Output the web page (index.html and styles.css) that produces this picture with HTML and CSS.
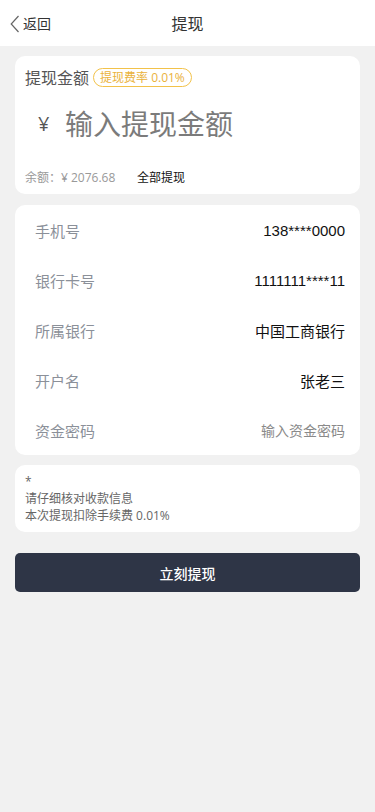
FILE: index.html
```html
<!DOCTYPE html>
<html lang="zh">
<head>
<meta charset="utf-8">
<meta name="viewport" content="width=device-width, initial-scale=1">
<title>提现</title>
<link rel="stylesheet" href="styles.css">
</head>
<body>
<header class="nav">
  <div class="back">
    <svg class="back-icon" width="10" height="18" viewBox="0 0 10 18"><path d="M8.5 1 L1.2 9 L8.5 17" fill="none" stroke="#666" stroke-width="1.2"/></svg>
    <span>返回</span>
  </div>
  <div class="nav-title">提现</div>
</header>
<main class="page">
  <section class="card amount-card">
    <div class="amount-title">
      <span>提现金额</span>
      <span class="rate">提现费率 0.01%</span>
    </div>
    <div class="amount-input">
      <span class="yen">¥</span>
      <span class="placeholder">输入提现金额</span>
    </div>
    <div class="balance">
      <span class="balance-label">余额：¥ 2076.68</span>
      <span class="all">全部提现</span>
    </div>
  </section>
  <section class="card info-card">
    <div class="row"><span class="label">手机号</span><span class="value num">138****0000</span></div>
    <div class="row"><span class="label">银行卡号</span><span class="value num">1111111****11</span></div>
    <div class="row"><span class="label">所属银行</span><span class="value">中国工商银行</span></div>
    <div class="row"><span class="label">开户名</span><span class="value">张老三</span></div>
    <div class="row"><span class="label">资金密码</span><span class="value hint">输入资金密码</span></div>
  </section>
  <section class="card note-card">
    <div>*</div>
    <div>请仔细核对收款信息</div>
    <div>本次提现扣除手续费 0.01%</div>
  </section>
  <button class="submit">立刻提现</button>
</main>
</body>
</html>
```
FILE: styles.css
```css
* { box-sizing: border-box; }
html, body { margin: 0; padding: 0; }
body {
  background: #f1f1f1;
  font-family: "Open Sans", "Noto Sans CJK SC", sans-serif;
  color: #333;
  min-height: 812px;
}
.nav {
  height: 46px;
  background: #fff;
  display: flex;
  align-items: center;
  justify-content: center;
  position: relative;
}
.back {
  position: absolute;
  left: 10px;
  top: 0;
  height: 46px;
  display: flex;
  align-items: center;
  font-size: 14px;
  color: #333;
}
.back-icon { margin-right: 3px; margin-top: 1px; }
.nav-title { font-size: 16px; color: #333; }
.page { padding: 10px 15px 0; }
.card {
  background: #fff;
  border-radius: 10px;
}
.amount-card { padding: 10px 10px 8px; }
.amount-title {
  height: 22px;
  display: flex;
  align-items: center;
  font-size: 16px;
  color: #555;
}
.rate {
  margin-left: 4px;
  height: 19px;
  padding: 0 6px;
  border: 1px solid #f2c24a;
  border-radius: 10px;
  color: #eab23b;
  font-size: 12px;
  display: flex;
  align-items: center;
}
.amount-input {
  margin-top: 10px;
  height: 50px;
  display: flex;
  align-items: center;
  padding-left: 13px;
}
.yen { font-size: 20px; color: #555; width: 27px; }
.placeholder { font-size: 28px; color: #7b7b7b; }
.balance {
  margin-top: 20px;
  height: 18px;
  display: flex;
  align-items: center;
  font-size: 12px;
}
.balance-label { color: #999; width: 112px; }
.all { color: #111; }
.info-card { margin-top: 11px; padding: 0 15px 0 20px; }
.row {
  height: 50px;
  display: flex;
  align-items: center;
  justify-content: space-between;
  font-size: 15px;
}
.label { color: #8b9099; }
.value { color: #111; }
.value.num { font-family: "Liberation Sans", "Noto Sans CJK SC", sans-serif; }
.value.hint { color: #8a8a8a; font-size: 14px; }
.note-card {
  margin-top: 10px;
  padding: 8px 10px;
  font-size: 12px;
  line-height: 17px;
  color: #666;
}
.submit {
  display: block;
  width: 100%;
  margin-top: 21px;
  height: 39px;
  border: none;
  border-radius: 5px;
  background: #2e3546;
  color: #fff;
  font-family: "Noto Sans CJK SC", sans-serif;
  font-size: 14px;
  font-weight: 500;
}
```
